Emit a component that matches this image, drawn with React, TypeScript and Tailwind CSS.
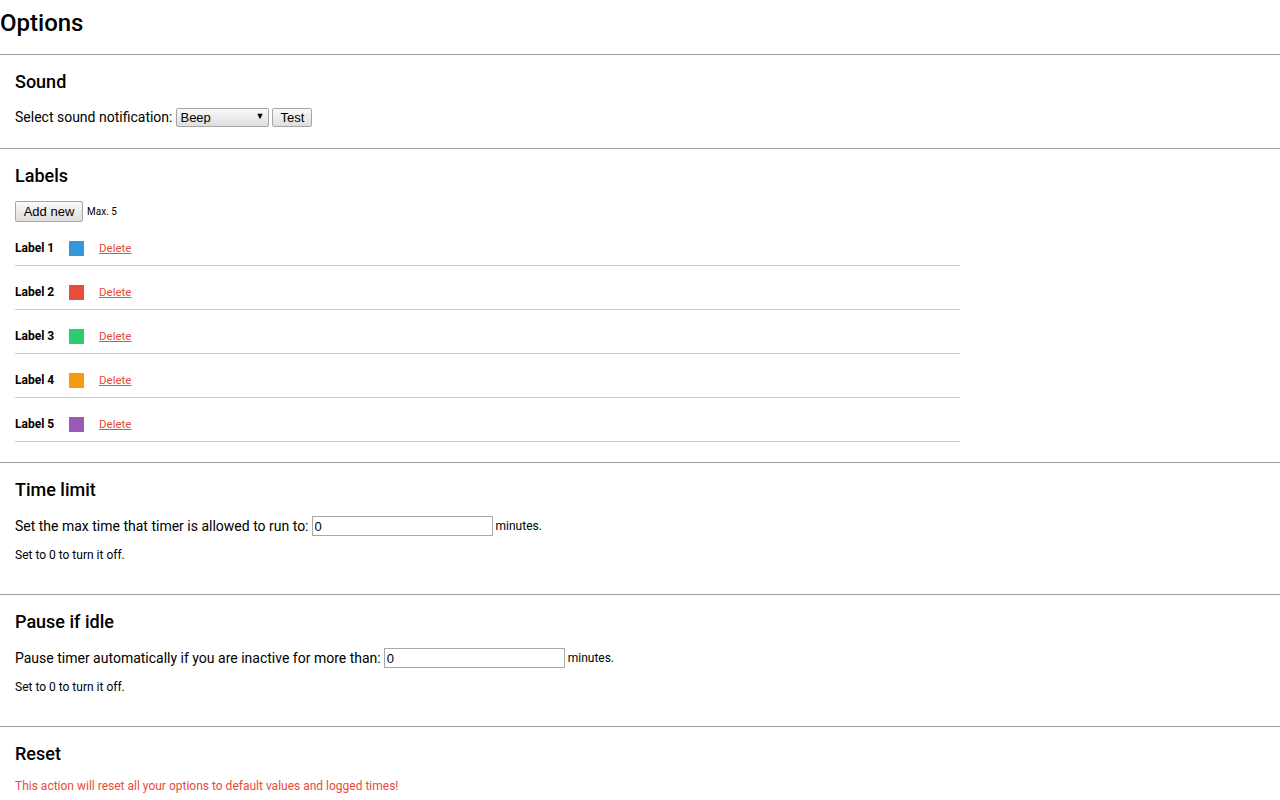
import React from 'react'

const labels = [
  { name: 'Label 1', color: 'bg-[#3498db]' },
  { name: 'Label 2', color: 'bg-[#e74c3c]' },
  { name: 'Label 3', color: 'bg-[#2ecc71]' },
  { name: 'Label 4', color: 'bg-[#f39c12]' },
  { name: 'Label 5', color: 'bg-[#9b59b6]' },
]

const buttonCls =
  'rounded-[2px] border border-[#a6a6a6] bg-gradient-to-b from-[#fafafa] to-[#dedede] px-[6px] text-[13px] leading-none text-black font-["Liberation_Sans",Arial,sans-serif]'

function Section({ title, children, last }: { title: string; children: React.ReactNode; last?: boolean }) {
  return (
    <section className={last ? 'px-[15px] pt-[16px]' : 'border-b border-[#9e9e9e] px-[15px] pt-[16px]'}>
      <h3 className="text-[18px] font-medium leading-[22px]">{title}</h3>
      {children}
    </section>
  )
}

function MinutesField({ text }: { text: string }) {
  return (
    <div className="pb-[31px]">
      <div className="mt-[15px] flex h-[20px] items-center text-[14px]">
        <span>{text}</span>
        <input
          type="text"
          defaultValue="0"
          className="ml-[3px] h-[20px] w-[181px] border border-[#a9a9a9] px-[2px] text-[13px] font-['Liberation_Sans',Arial,sans-serif] outline-none"
        />
        <span className="ml-[3px] text-[12px]">minutes.</span>
      </div>
      <p className="mt-[12px] text-[12px] leading-[15px]">Set to 0 to turn it off.</p>
    </div>
  )
}

export default function App() {
  return (
    <div className="min-h-[800px] bg-white text-black font-['Roboto','Noto_Sans',sans-serif]">
      <header className="border-b border-[#9e9e9e] pb-[17px] pt-[9px]">
        <h1 className="text-[24px] font-medium leading-[28px]">Options</h1>
      </header>

      <Section title="Sound">
        <div className="mt-[14px] flex h-[21px] items-center text-[14px]">
          <span>Select sound notification:</span>
          <div className="relative ml-[4px]">
            <select className="h-[19px] w-[93px] appearance-none rounded-[2px] border border-[#a6a6a6] bg-gradient-to-b from-[#fafafa] to-[#dedede] pl-[3px] text-[13px] leading-none font-['Liberation_Sans',Arial,sans-serif] outline-none">
              <option>Beep</option>
            </select>
            <span className="pointer-events-none absolute right-[5px] top-[3px] text-[9px] leading-[13px]">▼</span>
          </div>
          <button type="button" className={`ml-[3px] h-[19px] w-[40px] ${buttonCls}`}>
            Test
          </button>
        </div>
        <div className="h-[20px]" />
      </Section>

      <Section title="Labels">
        <div className="mt-[14px] flex items-center">
          <button type="button" className={`h-[21px] w-[68px] ${buttonCls}`}>
            Add new
          </button>
          <span className="ml-[4px] text-[10px]">Max. 5</span>
        </div>
        <ul className="w-[945px]">
          {labels.map((l) => (
            <li key={l.name} className="flex h-[44px] items-start border-b border-[#cccccc] pt-[19px]">
              <div className="flex h-[15px] items-center">
                <span className="w-[54px] text-[12px] font-bold leading-[15px]">{l.name}</span>
                <span className={`h-[15px] w-[15px] ${l.color}`} />
                <a href="#" className="ml-[15px] text-[11.5px] leading-[15px] text-[#e74c3c] underline">
                  Delete
                </a>
              </div>
            </li>
          ))}
        </ul>
        <div className="h-[20px]" />
      </Section>

      <Section title="Time limit">
        <MinutesField text="Set the max time that timer is allowed to run to:" />
      </Section>

      <Section title="Pause if idle">
        <MinutesField text="Pause timer automatically if you are inactive for more than:" />
      </Section>

      <Section title="Reset" last>
        <p className="mt-[14px] text-[12px] leading-[15px] text-[#e74c3c]">
          This action will reset all your options to default values and logged times!
        </p>
      </Section>
    </div>
  )
}
